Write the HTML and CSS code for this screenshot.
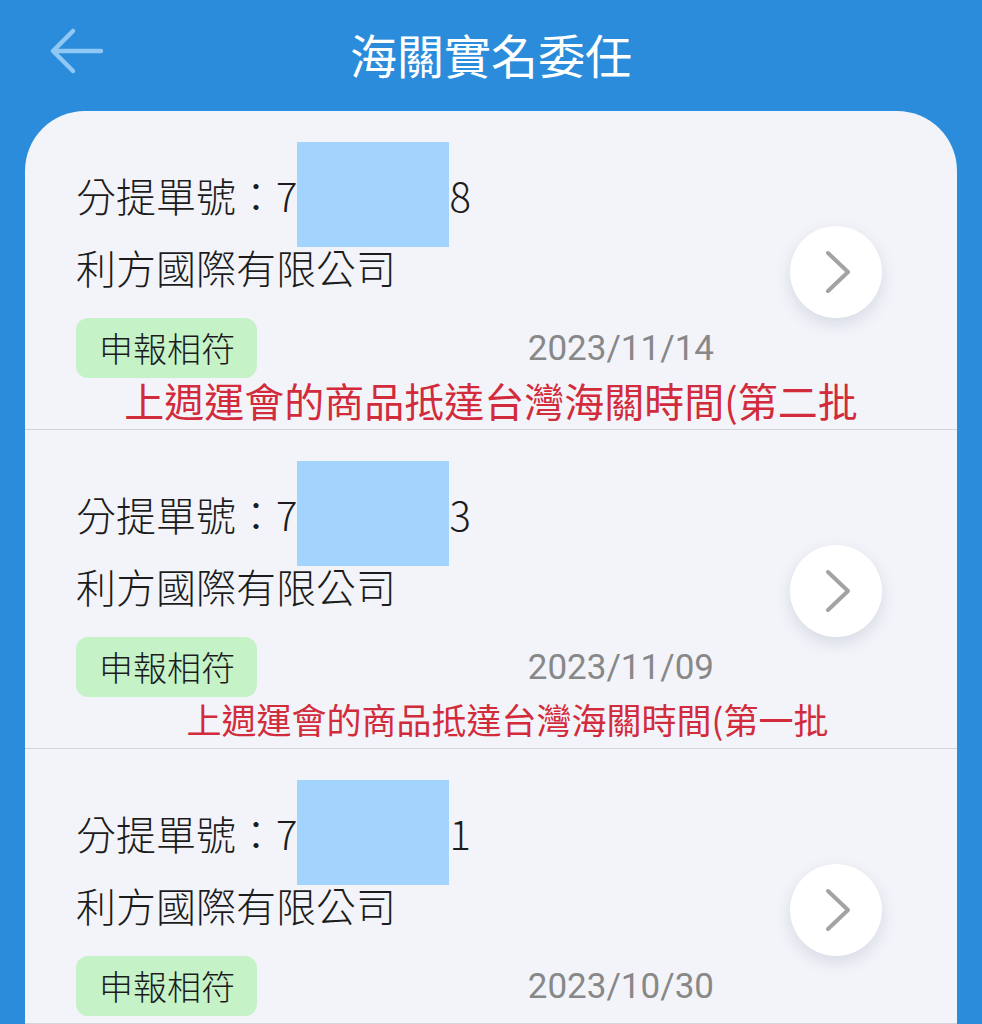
FILE: index.html
```html
<!DOCTYPE html>
<html lang="zh-Hant">
<head>
    <meta charset="UTF-8">
    <meta name="viewport" content="width=device-width, initial-scale=1.0">
    <title>海關實名委任</title>
    <link rel="stylesheet" href="styles.css">
</head>
<body>
    <header class="topbar">
        <a class="back" href="#">
            <svg width="64" height="60" viewBox="0 0 64 60"><path d="M8 27 H56 M28 7 L8 27 L28 47" fill="none" stroke="#8fc8f5" stroke-width="4.5" stroke-linecap="round" stroke-linejoin="round"/></svg>
        </a>
        <h1>海關實名委任</h1>
        <span></span>
    </header>

    <div class="card">
        <div class="item">
            <div class="info">
                <div class="line">分提單號：7<span class="mask">1234567</span>8</div>
                <div class="line">利方國際有限公司</div>
                <div class="meta">
                    <span class="badge">申報相符</span>
                    <span class="date">2023/11/14</span>
                </div>
            </div>
            <a class="go" href="#">
                <svg width="92" height="92" viewBox="0 0 92 92"><path d="M38 27 L58 46 L38 65" fill="none" stroke="#a3a3a3" stroke-width="4" stroke-linecap="round" stroke-linejoin="round"/></svg>
            </a>
            <div class="note">上週運會的商品抵達台灣海關時間(第二批</div>
        </div>

        <div class="item">
            <div class="info">
                <div class="line">分提單號：7<span class="mask">1234567</span>3</div>
                <div class="line">利方國際有限公司</div>
                <div class="meta">
                    <span class="badge">申報相符</span>
                    <span class="date">2023/11/09</span>
                </div>
            </div>
            <a class="go" href="#">
                <svg width="92" height="92" viewBox="0 0 92 92"><path d="M38 27 L58 46 L38 65" fill="none" stroke="#a3a3a3" stroke-width="4" stroke-linecap="round" stroke-linejoin="round"/></svg>
            </a>
            <div class="note small">上週運會的商品抵達台灣海關時間(第一批</div>
        </div>

        <div class="item">
            <div class="info">
                <div class="line">分提單號：7<span class="mask">1234567</span>1</div>
                <div class="line">利方國際有限公司</div>
                <div class="meta">
                    <span class="badge">申報相符</span>
                    <span class="date">2023/10/30</span>
                </div>
            </div>
            <a class="go" href="#">
                <svg width="92" height="92" viewBox="0 0 92 92"><path d="M38 27 L58 46 L38 65" fill="none" stroke="#a3a3a3" stroke-width="4" stroke-linecap="round" stroke-linejoin="round"/></svg>
            </a>
        </div>
    </div>
</body>
</html>
```

FILE: styles.css
```css
body { margin: 0; padding: 0; background-color: #2b8cdb; font-family: "Noto Sans CJK TC", "Noto Sans", sans-serif; color: #1c1c1c; overflow: hidden; }
.topbar { height: 111px; display: grid; grid-template-columns: 1fr auto 1fr; align-items: center; box-sizing: border-box; padding-bottom: 3px; }
.back { display: flex; margin-left: 45px; }
.topbar h1 { margin: 0; font-size: 47px; font-weight: 400; color: #fff; line-height: 60px; }
.card { margin: 0 25px; min-height: 1000px; background-color: #f3f4f9; border-radius: 60px 60px 0 0; }
.item { display: grid; grid-template-columns: 1fr 92px; padding: 48px 75px 7px 51px; border-bottom: 1px solid #d3d4d9; }
.line { font-size: 40px; font-weight: 300; line-height: 72px; white-space: nowrap; }
.mask { position: relative; display: inline-block; vertical-align: top; width: 152px; overflow: visible; color: transparent; }
.mask::after { content: ""; position: absolute; left: 0; right: 0; top: -17px; bottom: -16px; background-color: #a3d4fe; }
.meta { display: flex; justify-content: space-between; align-items: center; margin-top: 15px; padding-right: 76px; }
.badge { display: inline-block; height: 60px; line-height: 60px; padding: 0 22px 0 23px; background-color: #c6f2c8; border-radius: 12px; font-size: 34px; font-weight: 300; }
.date { font-family: Roboto, "Noto Sans", sans-serif; font-size: 35px; color: #888; }
.go { align-self: center; margin-top: 7px; width: 92px; height: 92px; border-radius: 50%; background-color: #fff; box-shadow: 0 6px 16px rgba(70, 90, 130, 0.16); display: flex; }
.note { grid-column: 1 / -1; margin: 0 -75px 0 -51px; text-align: center; font-size: 40px; line-height: 44px; color: #d22b3c; white-space: nowrap; }
.note.small { font-size: 35px; padding-left: 33px; }
```
